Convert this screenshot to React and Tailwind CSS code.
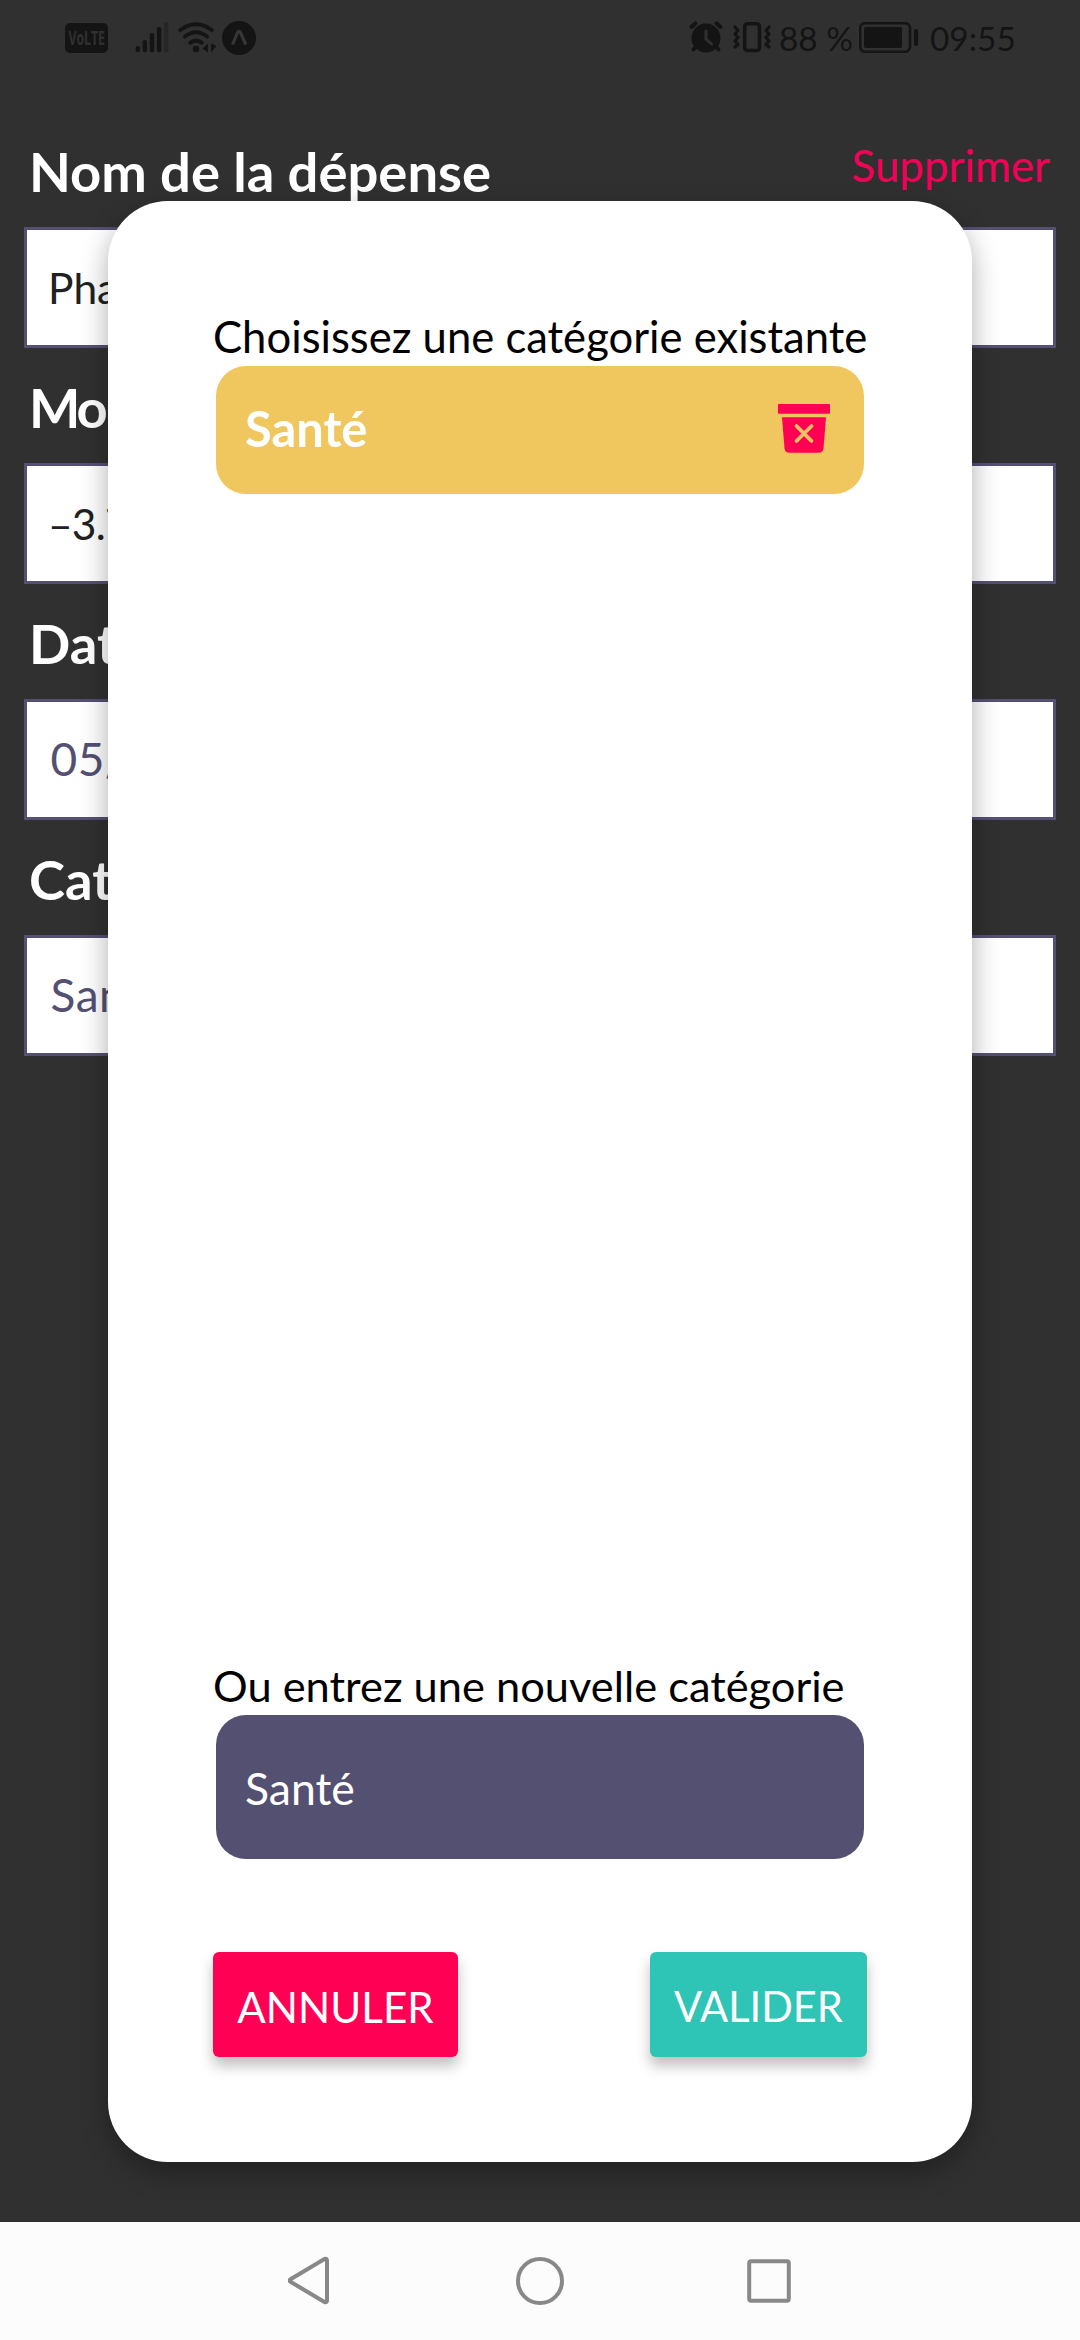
import React from "react";

function StatusLeft() {
  return (
    <svg width="200" height="40" viewBox="60 18 200 40" fill="#141414">
      <rect x="65" y="23" width="43" height="30" rx="5" />
      <text x="68.5" y="45" textLength="36.5" lengthAdjust="spacingAndGlyphs" fontFamily="Open Sans, sans-serif" fontWeight="700" fontSize="19.5" fill="#303030">VoLTE</text>
      <rect x="135.7" y="46" width="4.4" height="6.3" rx="2.1" />
      <rect x="142.7" y="40" width="4.4" height="12.3" rx="2" />
      <rect x="149.8" y="33" width="4.4" height="19.3" rx="2" />
      <rect x="156.9" y="27" width="4.4" height="25.3" rx="2" />
      <rect x="164" y="22" width="4.4" height="30.3" rx="1" fill="#262626" />
      <g fill="none" stroke="#141414" strokeWidth="4" strokeLinecap="round">
        <path d="M180.3 30q15.7-11.500 31.400 0" />
        <path d="M185 36.500q11-8.500 22 0" />
        <path d="M190.300 42.700q5.700-4.200 11.400 0" />
      </g>
      <circle cx="196" cy="49" r="3.300" />
      <path d="M202.500 48.500l5.500-5v9zM211 43.500v9l5.500-6.500z" />
      <circle cx="239" cy="38" r="17" />
      <path d="M232.500 44.500l5.300-12.500q1.200-1.500 2.400 0l5.600 12.500" fill="none" stroke="#363636" strokeWidth="3.200" />
    </svg>
  );
}

function AlarmVibrate() {
  return (
    <svg width="84" height="36" viewBox="688 20 84 36" fill="none" stroke="#141414">
      <circle cx="706" cy="38" r="14.500" fill="#141414" stroke="none" />
      <path d="M691.500 27l4-3.700M720.500 27l-4-3.700M696.500 46l-3 3.500M715.500 46l3 3.500" strokeWidth="4" strokeLinecap="round" />
      <path d="M706 31v8l5.500 5" stroke="#303030" strokeWidth="3" strokeLinecap="round" />
      <rect x="744.700" y="23.700" width="14.800" height="26.800" rx="3" strokeWidth="3.600" />
      <path d="M735 27l3 3.500-3 3.500 3 3.500-3 3.500 3 3.500-3 2.500M769 27l-3 3.500 3 3.500-3 3.500 3 3.500-3 3.500 3 2.500" strokeWidth="3.200" strokeLinejoin="round" strokeLinecap="round" />
    </svg>
  );
}

function Battery() {
  return (
    <svg width="60" height="32" viewBox="859 22 60 32" fill="#141414">
      <rect x="860.200" y="23.200" width="49.800" height="28.600" rx="5" fill="none" stroke="#141414" strokeWidth="2.600" />
      <rect x="864" y="27" width="38" height="21" rx="2" />
      <rect x="914" y="29" width="4.200" height="17" rx="2" />
    </svg>
  );
}

function TrashIcon() {
  return (
    <svg width="54" height="50" viewBox="0 0 54 50" fill="#ff0055">
      <rect x="1" y="0" width="52" height="9.700" rx="1" />
      <path d="M5 13.300h44l-2.500 31q-.5 4.500-5 4.500h-29q-4.500 0-5-4.500z" />
      <path d="M19.500 22l15 15M34.500 22l-15 15" stroke="#f5c263" strokeWidth="3.800" strokeLinecap="round" />
    </svg>
  );
}

function Field({ label, value, tone, action, tracking = "" }) {
  return (
    <section className="mb-[22.4px]">
      <div className="mb-[20.6px] flex h-[72px] items-start justify-between pl-[5px] pr-[6px]">
        <h2 className={`text-[54.400px] font-bold leading-[74px] text-white ${tracking}`}>{label}</h2>
        {action && <button className="text-[43.800px] leading-[63px] text-[#f50057]">{action}</button>}
      </div>
      <div className="flex h-[121px] items-center border-[3px] border-[#535072] bg-white pl-[21px]">
        <span className={tone}>{value}</span>
      </div>
    </section>
  );
}

export default function App() {
  const dark = "pt-[2px] text-[42.500px] leading-[60px] text-[#212121]";
  const violet = "pl-[2.500px] text-[46px] leading-[60px] tracking-[0.500px] text-[#535072]";
  return (
    <div className="relative flex h-[2340px] w-[1080px] flex-col overflow-hidden bg-[#303030] font-['Lato',sans-serif] whitespace-nowrap">
      <header className="flex h-[76px] shrink-0 items-center justify-between pl-[60px] pr-[66px] text-[33.400px] text-[#141414]">
        <StatusLeft />
        <div className="flex h-full items-center">
          <AlarmVibrate />
          <span className="ml-[7px] w-[80px] leading-[76px]">88 %</span>
          <Battery />
          <span className="ml-[11px] w-[84px] leading-[76px]">09:55</span>
        </div>
      </header>

      <main className="flex-1 px-[24px] pt-[58px]">
        <Field label="Nom de la dépense" value="Pharmacie" tone={dark} action="Supprimer" />
        <Field label="Montant" value="–3.7" tone={`${dark} tracking-[-0.800px]`} tracking="tracking-[-3px]" />
        <Field label="Date" value="05/" tone={violet} />
        <Field label="Catégorie" value="Santé" tone={violet} />
      </main>

      <nav className="flex h-[118px] shrink-0 items-center justify-center bg-[#fcfcfc]">
        <svg width="504" height="50" viewBox="288 2256 504 50" fill="none" stroke="#888" strokeWidth="4" strokeLinejoin="round">
          <path d="M290.500 2279.200L324.500 2259q2.500-.8 2.500 1.500v40q0 2.300-2.500 1.500l-34-20.200q-1.800-1.300 0-2.600z" />
          <circle cx="540" cy="2281" r="22" />
          <rect x="749.200" y="2261.200" width="39.600" height="39.600" rx="2" />
        </svg>
      </nav>

      <div role="dialog" className="absolute left-[108px] top-[201px] flex h-[1961px] w-[864px] flex-col rounded-[60px] bg-white px-[105px] pt-[105px] shadow-[0_10px_28px_rgba(0,0,0,0.32)]">
        <p className="mb-[-1px] text-[43.600px] leading-[61px] text-black">Choisissez une catégorie existante</p>
        <div className="mx-[3px] flex h-[128px] items-center justify-between rounded-[30px] bg-[#f0c75e] pl-[29px] pr-[33px]">
          <span className="pb-[4px] text-[48.800px] font-bold leading-[60px] text-white">Santé</span>
          <span className="pb-[3px]"><TrashIcon /></span>
        </div>
        <p className="mt-[1161px] mb-[-1px] text-[43.400px] leading-[61px] text-black">Ou entrez une nouvelle catégorie</p>
        <div className="mx-[3px] flex h-[144px] items-center rounded-[30px] bg-[#535072] pl-[29px]">
          <span className="pt-[2px] text-[44.500px] leading-[60px] text-white">Santé</span>
        </div>
        <div className="mt-[93px] flex justify-between text-[42.200px] text-white">
          <button className="h-[105px] w-[245px] rounded-[6px] bg-[#ff0055] pt-[4px] shadow-[0_9px_14px_rgba(0,0,0,0.25)]">ANNULER</button>
          <button className="h-[105px] w-[217px] rounded-[6px] bg-[#2ec4b6] pt-[4px] text-[41.600px] shadow-[0_9px_14px_rgba(0,0,0,0.25)]">VALIDER</button>
        </div>
      </div>
    </div>
  );
}
